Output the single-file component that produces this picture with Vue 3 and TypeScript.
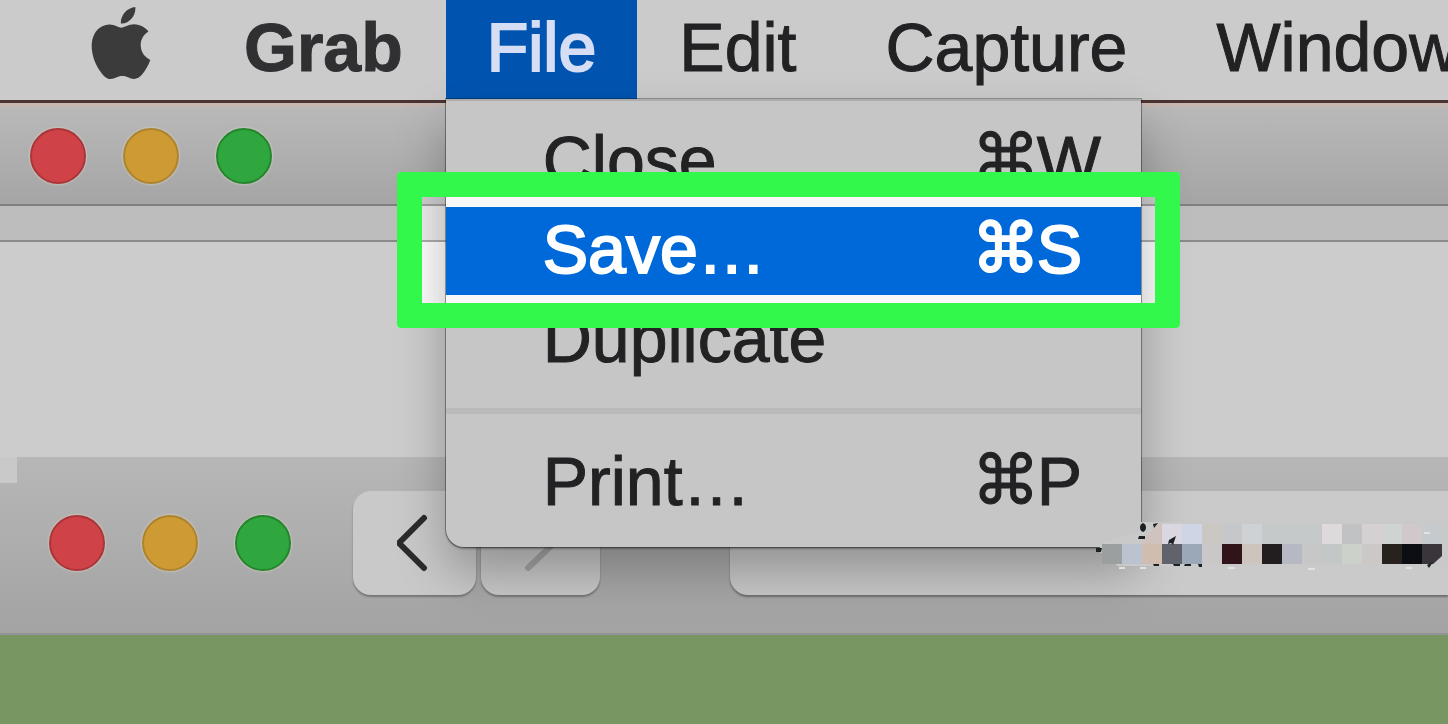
<script setup lang="ts">
interface Block {
  x: number
  y: number
  fill: string
}
interface MenuEntry {
  label: string
  keys?: string
  active?: boolean
  separated?: boolean
}

const entries: MenuEntry[] = [
  { label: 'Close', keys: 'W' },
  { label: 'Save…', keys: 'S', active: true },
  { label: 'Duplicate' },
  { label: 'Print…', keys: 'P', separated: true },
]

const lights: string[] = ['red', 'amber', 'green']

const upper: string[] = [
  '#d0c2be', '#dbd7e0', '#ced6e6', '#cbc7c3', '#c5c7c8', '#cfd2d5', '#c6c9ca', '#c6c9ca',
  '#c6c9ca', '#ded9db', '#c0c2c4', '#d5d1d3', '#cfd3d1', '#d0c8ca', '#c5cacf',
]
const lower: string[] = [
  '#9c9f9f', '#bcc3d0', '#d0bdb0', '#60626c', '#9aa8b8', '#c9c7c7', '#30141a', '#cdc5bd', '#221e20',
  '#b6b9c4', '#c8c7c8', '#c3c7c8', '#ccd2ca', '#cbc8c7', '#28221f', '#0d0d14', '#39353b',
]
const blocks: Block[] = [
  ...upper.map((fill, i) => ({ x: 44 + i * 20, y: 10, fill })),
  ...lower.map((fill, i) => ({ x: 4 + i * 20, y: 30, fill })),
]
</script>

<template>
  <div class="screen">
    <nav class="menubar" aria-label="Menu bar">
      <button class="apple" type="button" aria-label="Apple">
        <svg viewBox="2 0 20 24" aria-hidden="true">
          <path
            d="M12.152 6.896c-.948 0-2.415-1.078-3.96-1.04-2.04.027-3.91 1.183-4.961 3.014-2.117 3.675-.546 9.103 1.519 12.09 1.013 1.454 2.208 3.09 3.792 3.039 1.52-.065 2.09-.987 3.935-.987 1.831 0 2.35.987 3.96.948 1.637-.026 2.676-1.48 3.676-2.948 1.156-1.688 1.636-3.325 1.662-3.415-.039-.013-3.182-1.221-3.22-4.857-.026-3.04 2.48-4.494 2.597-4.559-1.429-2.09-3.623-2.324-4.39-2.376-2-.156-3.675 1.09-4.61 1.09zM15.53 3.83c.843-1.012 1.4-2.427 1.245-3.83-1.207.052-2.662.805-3.532 1.818-.78.896-1.454 2.338-1.273 3.714 1.338.104 2.715-.688 3.559-1.701"
          />
        </svg>
      </button>
      <button class="title app" type="button">Grab</button>
      <div class="open">
        <button class="title active" type="button" aria-haspopup="true" aria-expanded="true">File</button>
        <ul class="menu">
          <li v-for="entry in entries" :key="entry.label" :class="{ separated: entry.separated }">
            <button class="entry" :class="{ active: entry.active }" type="button">
              <span>{{ entry.label }}</span>
              <span v-if="entry.keys" class="keys"><span class="cmd">⌘</span>{{ entry.keys }}</span>
            </button>
            <div v-if="entry.active" class="highlight"></div>
          </li>
        </ul>
      </div>
      <button class="title" type="button">Edit</button>
      <button class="title" type="button">Capture</button>
      <button class="title" type="button">Window</button>
    </nav>

    <section class="window">
      <header class="titlebar">
        <div class="lights">
          <button v-for="l in lights" :key="l" type="button" :class="['light', l]" :aria-label="l"></button>
        </div>
      </header>
      <div class="strip"></div>
      <div class="content"></div>
    </section>

    <section class="browser">
      <div class="notch"></div>
      <div class="lights">
        <button v-for="l in lights" :key="l" type="button" :class="['light', l]" :aria-label="l"></button>
      </div>
      <div class="arrows">
        <button class="arrow" type="button" aria-label="Back">
          <svg viewBox="0 0 36 60" aria-hidden="true"><path d="M27 5 2 30 27 55" /></svg>
        </button>
        <button class="arrow forward" type="button" aria-label="Forward">
          <svg viewBox="0 0 36 60" aria-hidden="true"><path d="M5 5 31 30 5 55" /></svg>
        </button>
      </div>
      <input class="address" type="text" aria-label="Address" />
      <svg class="mosaic" viewBox="0 0 350 60" aria-hidden="true">
        <path class="patch" d="M2 38V30L30 20H40L43 8H350V52H20Z" />
        <rect v-for="(b, i) in blocks" :key="i" :x="b.x" :y="b.y" width="20" height="20" :fill="b.fill" />
        <path class="patch" d="M344 30v12l-10 9h14V30z" />
        <path class="patch" d="M42 8h20L46 26h-4z" />
        <path
          class="ink"
          d="M45 9c4 1 4 8 0 9-4-1-4-8 0-9zM41 22h6v3h-7zM55 10l5-1-4 5zM71 26l7-4-3 9-2-2-3 1zM-2 34h6l-1 4h-5zM55 50h6v2h-5zM75 50h7v2h-6zM87 50h6v2h-7zM100 50h4v3h-3zM329 51l6-3-4 6z"
        />
        <path class="glint" d="M21 54h6M42 54h6M130 54h7M210 55h7M308 54h6M326 19h6" />
      </svg>
    </section>
    <div class="desktop"></div>
  </div>
</template>

<style>
body {
  margin: 0;
}
</style>

<style scoped>
.screen {
  display: flex;
  flex-direction: column;
  min-height: 100vh;
  overflow: hidden;
  font-family: "Liberation Sans", Arial, sans-serif;
  font-size: 68px;
  color: #222224;
}
button {
  margin: 0;
  padding: 0;
  border: 0;
  background: none;
  font: inherit;
  color: inherit;
}
.menubar {
  position: relative;
  z-index: 2;
  display: flex;
  height: 100px;
  background: #cbcbcb;
  border-bottom: 3px solid #4a3330;
}
.apple {
  flex: none;
  width: 60px;
  margin: 0 52px 0 91px;
}
.apple svg {
  display: block;
  width: 60px;
  height: 74px;
  margin-bottom: 14px;
  fill: #3b3b3b;
}
.title {
  flex: none;
  height: 100px;
  padding: 0 47px 5px 42px;
  line-height: 95px;
  white-space: nowrap;
  -webkit-text-stroke: 1px currentColor;
}
.title.app {
  padding: 0 43px 5px 41px;
  font-weight: 700;
  color: #303032;
}
.title.active {
  padding: 0 41px 5px;
  background: #0054af;
  color: #d6def5;
  -webkit-text-stroke-width: 2px;
}
.open {
  position: relative;
  flex: none;
}
.menu {
  position: absolute;
  top: 99px;
  left: 0;
  display: flex;
  flex-direction: column;
  gap: 1px;
  box-sizing: border-box;
  width: 695px;
  margin: 0;
  padding: 17px 0 20px;
  border-top: 2px solid #adadad;
  border-radius: 0 0 18px 18px;
  background: #c6c6c6;
  list-style: none;
  box-shadow: 0 0 0 1px rgba(0, 0, 0, 0.3), 0 2px 2px rgba(0, 0, 0, 0.3), 0 25px 50px rgba(0, 0, 0, 0.28);
}
.menu li {
  position: relative;
}
.separated::before {
  content: "";
  display: block;
  height: 6px;
  margin: 23px 0 25px;
  background: #bababa;
}
.entry {
  display: flex;
  justify-content: space-between;
  width: 100%;
  padding: 0 0 4px 97px;
  font-size: 68px;
  line-height: 84px;
  text-align: left;
  white-space: nowrap;
  -webkit-text-stroke: 1px currentColor;
}
.entry.active {
  background: #0054ae;
  color: #d0d0d0;
  -webkit-text-stroke-width: 2px;
}
.keys {
  display: flex;
  width: 169px;
}
.cmd {
  width: 65px;
  font-family: "DejaVu Sans", sans-serif;
}
.highlight {
  position: absolute;
  z-index: 1;
  inset: -35px -39px -33px -49px;
  border: 25px solid #31f84a;
  border-radius: 4px;
  backdrop-filter: brightness(1.25);
  pointer-events: none;
}
.titlebar {
  display: flex;
  align-items: center;
  height: 97px;
  border-top: 4px solid #c6b7b2;
  border-bottom: 2px solid #808080;
  background: linear-gradient(#b9b9b9, #a5a5a5);
}
.lights {
  display: flex;
  flex: none;
  gap: 37px;
  padding-left: 30px;
}
.light {
  width: 56px;
  height: 56px;
  border: 2px solid;
  border-radius: 50%;
  box-shadow: 0 0 2px 1px rgba(220, 210, 195, 0.55);
}
.red {
  border-color: #a93539;
  background: #cf4348;
}
.amber {
  border-color: #ac842f;
  background: #cd9a33;
}
.green {
  border-color: #24852f;
  background: #2fa73e;
}
.strip {
  height: 34px;
  border-bottom: 2px solid #8a8a8a;
  background: #bdbdbd;
}
.content {
  height: 215px;
  background: #cccccc;
}
.browser {
  position: relative;
  display: flex;
  align-items: center;
  box-sizing: border-box;
  height: 178px;
  padding-bottom: 4px;
  border-bottom: 2px solid #929497;
  background: linear-gradient(#b7b7b7, #a3a3a3);
}
.browser .lights {
  padding-left: 49px;
}
.notch {
  position: absolute;
  top: 0;
  left: 0;
  width: 17px;
  height: 26px;
  background: #c9c9c9;
}
.arrows {
  display: flex;
  flex: none;
  gap: 5px;
  margin: 0 130px 0 62px;
}
.arrow {
  display: flex;
  align-items: center;
  justify-content: center;
  box-sizing: border-box;
  width: 123px;
  height: 104px;
  border-radius: 18px;
  background: #c9c9c9;
  box-shadow: 0 2px 2px rgba(0, 0, 0, 0.3);
}
.arrow.forward {
  width: 119px;
}
.arrow svg {
  width: 36px;
  height: 60px;
  fill: none;
  stroke: #2b2b2d;
  stroke-width: 6;
  stroke-linecap: round;
  stroke-linejoin: round;
}
.arrow.forward svg {
  stroke: #a5a5a5;
}
.address {
  flex: 1;
  min-width: 0;
  box-sizing: border-box;
  height: 104px;
  padding: 0 24px;
  border: 0;
  border-radius: 18px 0 0 18px;
  background: #cacaca;
  box-shadow: 0 2px 2px rgba(0, 0, 0, 0.35);
  font: inherit;
}
.mosaic {
  position: absolute;
  z-index: 3;
  top: 57px;
  right: 0;
  width: 350px;
  height: 60px;
  overflow: visible;
}
.patch {
  fill: #c9c9c9;
}
.ink {
  fill: #1b2022;
}
.glint {
  stroke: #e2e2e0;
  stroke-width: 2;
}
.desktop {
  flex: 1;
  min-height: 88px;
  background: #789661;
}
</style>
